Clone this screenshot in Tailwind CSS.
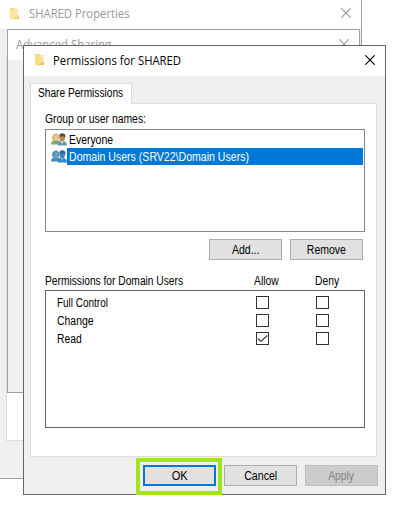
<!DOCTYPE html>
<html lang="en">
<head>
<meta charset="utf-8">
<title>Permissions for SHARED</title>
<script src="https://cdn.jsdelivr.net/npm/@tailwindcss/browser@4"></script>
</head>
<body class="bg-white">
<svg class="hidden">
  <symbol id="folder" viewBox="0 0 10 12">
    <path d="M0 0h5v11H0z" fill="#f3cb62"/>
    <path d="M3.500 1H8v8H3.500z" fill="#fbe09a"/>
    <path d="M0 0l4.500 1.500V12L0 10.500z" fill="#fbdb85"/>
    <path d="M7.500 7.500H9V11H4.500V9h3z" fill="#eec15a"/>
  </symbol>
  <symbol id="close" viewBox="0 0 10 10">
    <path d="M.3 .3l9.400 9.400M9.700 .3L.3 9.700" fill="none" stroke="currentColor" stroke-width="1.100"/>
  </symbol>
</svg>
<main class="relative h-[512px] w-[407px] overflow-hidden bg-white font-['Liberation_Sans',sans-serif] text-[12px] leading-[17px] text-black">

  <!-- SHARED Properties -->
  <section class="absolute -left-px -top-px flex h-[480px] w-[363px] flex-col border border-[#a0a0a0] bg-[#efefef]">
    <header class="flex h-[29px] shrink-0 items-center bg-white pr-[10px] pl-[10px] text-[#999]">
      <svg class="mb-[2px] h-[12px] w-[10px] opacity-80"><use href="#folder"/></svg>
      <span class="ml-[9px] inline-block origin-left scale-x-[0.94] whitespace-nowrap font-['Open_Sans',sans-serif] text-[12px] -mt-[2px]">SHARED Properties</span>
      <svg class="-mt-[3px] ml-auto h-[10px] w-[10px]"><use href="#close"/></svg>
    </header>
    <div class="mt-[27px] mb-[37px] ml-[6px] mr-[6px] grow border border-[#dcdcdc] bg-white"></div>
  </section>

  <!-- Advanced Sharing -->
  <section class="absolute left-[7px] top-[29px] flex h-[364px] w-[353px] flex-col border border-[#a0a0a0] bg-[#efefef]">
    <header class="flex h-[30px] shrink-0 items-center bg-white pr-[10px] pl-[8px] text-[#999]">
      <span class="inline-block origin-left scale-x-[0.95] whitespace-nowrap font-['Open_Sans',sans-serif] text-[12px] -mt-[2px]">Advanced Sharing</span>
      <svg class="-mt-[2px] ml-auto h-[10px] w-[10px]"><use href="#close"/></svg>
    </header>
  </section>

  <!-- Permissions for SHARED -->
  <section class="absolute left-[23px] top-[45px] flex h-[450px] w-[363px] flex-col border border-[#666] bg-[#efefef]">
    <header class="flex h-[30px] shrink-0 items-center bg-white pr-[10px] pl-[11px]">
      <svg class="mb-[2px] h-[12px] w-[10px]"><use href="#folder"/></svg>
      <span class="ml-[8px] inline-block origin-left scale-x-[0.942] whitespace-nowrap font-['Open_Sans',sans-serif] text-[12px] -mt-px">Permissions for SHARED</span>
      <svg class="-mt-[2px] ml-auto h-[10px] w-[10px]"><use href="#close"/></svg>
    </header>

    <div class="relative z-10 mt-[7px] -mb-px ml-[6px] h-[21px] w-[102px] shrink-0 border border-b-0 border-[#dcdcdc] bg-white pl-[7px] pt-px">
      <span class="inline-block origin-left scale-x-[0.845] whitespace-nowrap">Share Permissions</span>
    </div>
    <div class="mr-[8px] ml-[6px] flex h-[354px] shrink-0 flex-col border border-[#dcdcdc] bg-white pr-[11px] pl-[14px]">
      <div class="mt-[7px] h-[15px]"><span class="inline-block origin-left scale-x-[0.865] whitespace-nowrap">Group or user names:</span></div>
      <div class="mt-[3px] h-[103px] w-[320px] border border-[#828790] pt-px pr-px pl-[5px]">
        <div class="flex h-[17px]">
          <svg class="mt-px h-[15px] w-[16px] shrink-0" viewBox="0 0 16 15">
            <path d="M0 12.500q0-4.500 5-4.500t5 4.500z" fill="#7fa66a"/>
            <path d="M1.300 8q-.8-6.500 3.700-6.500 4 .5 3.500 6z" fill="#c8b16a"/>
            <ellipse cx="5.300" cy="5.800" rx="2.200" ry="3" fill="#ecc7a3"/>
            <path d="M6.500 13.500Q7 9 11.500 9t4.500 4.500z" fill="#6d98bd"/>
            <ellipse cx="11.200" cy="5.800" rx="2.700" ry="3.600" fill="#b9855c"/>
            <path d="M8.300 4.500q0-3.300 3-3.300t3.200 3l-.5 2-1-2q-2 .3-4.700.3z" fill="#5a4a3c"/>
            <path d="M10 9.200h2.500l-1.200 2.500z" fill="#eef3f7"/>
          </svg>
          <span class="ml-[2px] inline-block origin-left scale-x-[0.868] whitespace-nowrap pt-px">Everyone</span>
        </div>
        <div class="flex h-[17px]">
          <svg class="mt-px h-[15px] w-[16px] shrink-0" viewBox="0 0 16 15">
            <path d="M0 12.500q0-4.500 5-4.500t5 4.500z" fill="#3f92b0"/>
            <path d="M1.300 8q-.8-6.500 3.700-6.500 4 .5 3.500 6z" fill="#3f88b5"/>
            <ellipse cx="5.300" cy="5.800" rx="2.200" ry="3" fill="#6a9fc6"/>
            <path d="M6.500 13.500Q7 9 11.500 9t4.500 4.500z" fill="#3487cb"/>
            <ellipse cx="11.200" cy="5.800" rx="2.700" ry="3.600" fill="#4c80ad"/>
            <path d="M8.300 4.500q0-3.300 3-3.300t3.200 3l-.5 2-1-2q-2 .3-4.700.3z" fill="#2b6496"/>
            <path d="M10 9.200h2.500l-1.200 2.500z" fill="#8fbfe6"/>
          </svg>
          <div class="h-[17px] grow bg-[#0078d7] pl-[2px] pt-px text-white"><span class="inline-block origin-left scale-x-[0.88] whitespace-nowrap">Domain Users (SRV22\Domain Users)</span></div>
        </div>
      </div>
      <div class="mt-[7px] flex h-[21px] justify-end gap-[8px] pr-[2px]">
        <button class="h-[21px] w-[73px] border border-[#adadad] bg-[#e1e1e1] pt-[2px]"><span class="inline-block scale-x-[0.875]">Add...</span></button>
        <button class="h-[21px] w-[73px] border border-[#adadad] bg-[#e1e1e1] pt-[2px]"><span class="inline-block scale-x-[0.875]">Remove</span></button>
      </div>
      <div class="mt-[13px] flex h-[15px]">
        <span class="inline-block w-[209px] origin-left scale-x-[0.852] whitespace-nowrap">Permissions for Domain Users</span>
        <span class="inline-block w-[61px] origin-left scale-x-[0.86]">Allow</span>
        <span class="inline-block origin-left scale-x-[0.86]">Deny</span>
      </div>
      <div class="mt-[2px] h-[138px] w-[320px] border border-[#646464] pt-[4px] pl-[11px]">
        <div class="flex h-[18px]">
          <div class="w-[199px]"><span class="inline-block origin-left scale-x-[0.83] whitespace-nowrap">Full Control</span></div>
          <div class="mt-px h-[13px] w-[60px]"><div class="h-[13px] w-[13px] border border-[#333] bg-white"></div></div>
          <div class="mt-px h-[13px] w-[13px] border border-[#333] bg-white"></div>
        </div>
        <div class="flex h-[18px]">
          <div class="w-[199px]"><span class="inline-block origin-left scale-x-[0.87]">Change</span></div>
          <div class="mt-px h-[13px] w-[60px]"><div class="h-[13px] w-[13px] border border-[#333] bg-white"></div></div>
          <div class="mt-px h-[13px] w-[13px] border border-[#333] bg-white"></div>
        </div>
        <div class="flex h-[18px]">
          <div class="w-[199px]"><span class="inline-block origin-left scale-x-[0.86]">Read</span></div>
          <div class="mt-px h-[13px] w-[60px]"><div class="h-[13px] w-[13px] border border-[#333] bg-white">
            <svg class="h-[11px] w-[11px]" viewBox="0 0 11 11"><path d="M1 5.500l3 3 6.300-6" fill="none" stroke="#404040" stroke-width="1.200"/></svg>
          </div></div>
          <div class="mt-px h-[13px] w-[13px] border border-[#333] bg-white"></div>
        </div>
      </div>
    </div>

    <footer class="mt-px flex items-start">
      <div class="ml-[112px] h-[37px] w-[86px] shrink-0 border-[4px] border-[#a2e41b] pt-[3px] pl-[3px]">
        <button class="block h-[21px] w-[73px] border-2 border-[#0078d7] bg-[#e1e1e1] pt-px leading-[16px]"><span class="inline-block scale-x-[0.92]">OK</span></button>
      </div>
      <button class="mt-[7px] ml-[2px] h-[21px] w-[73px] shrink-0 border border-[#adadad] bg-[#e1e1e1] pt-[2px]"><span class="inline-block scale-x-[0.885]">Cancel</span></button>
      <button class="mt-[7px] ml-[8px] h-[21px] w-[73px] shrink-0 border border-[#bfbfbf] bg-[#ccc] pt-[2px] text-[#838383]"><span class="inline-block scale-x-[0.85]">Apply</span></button>
    </footer>
  </section>
</main>
</body>
</html>
